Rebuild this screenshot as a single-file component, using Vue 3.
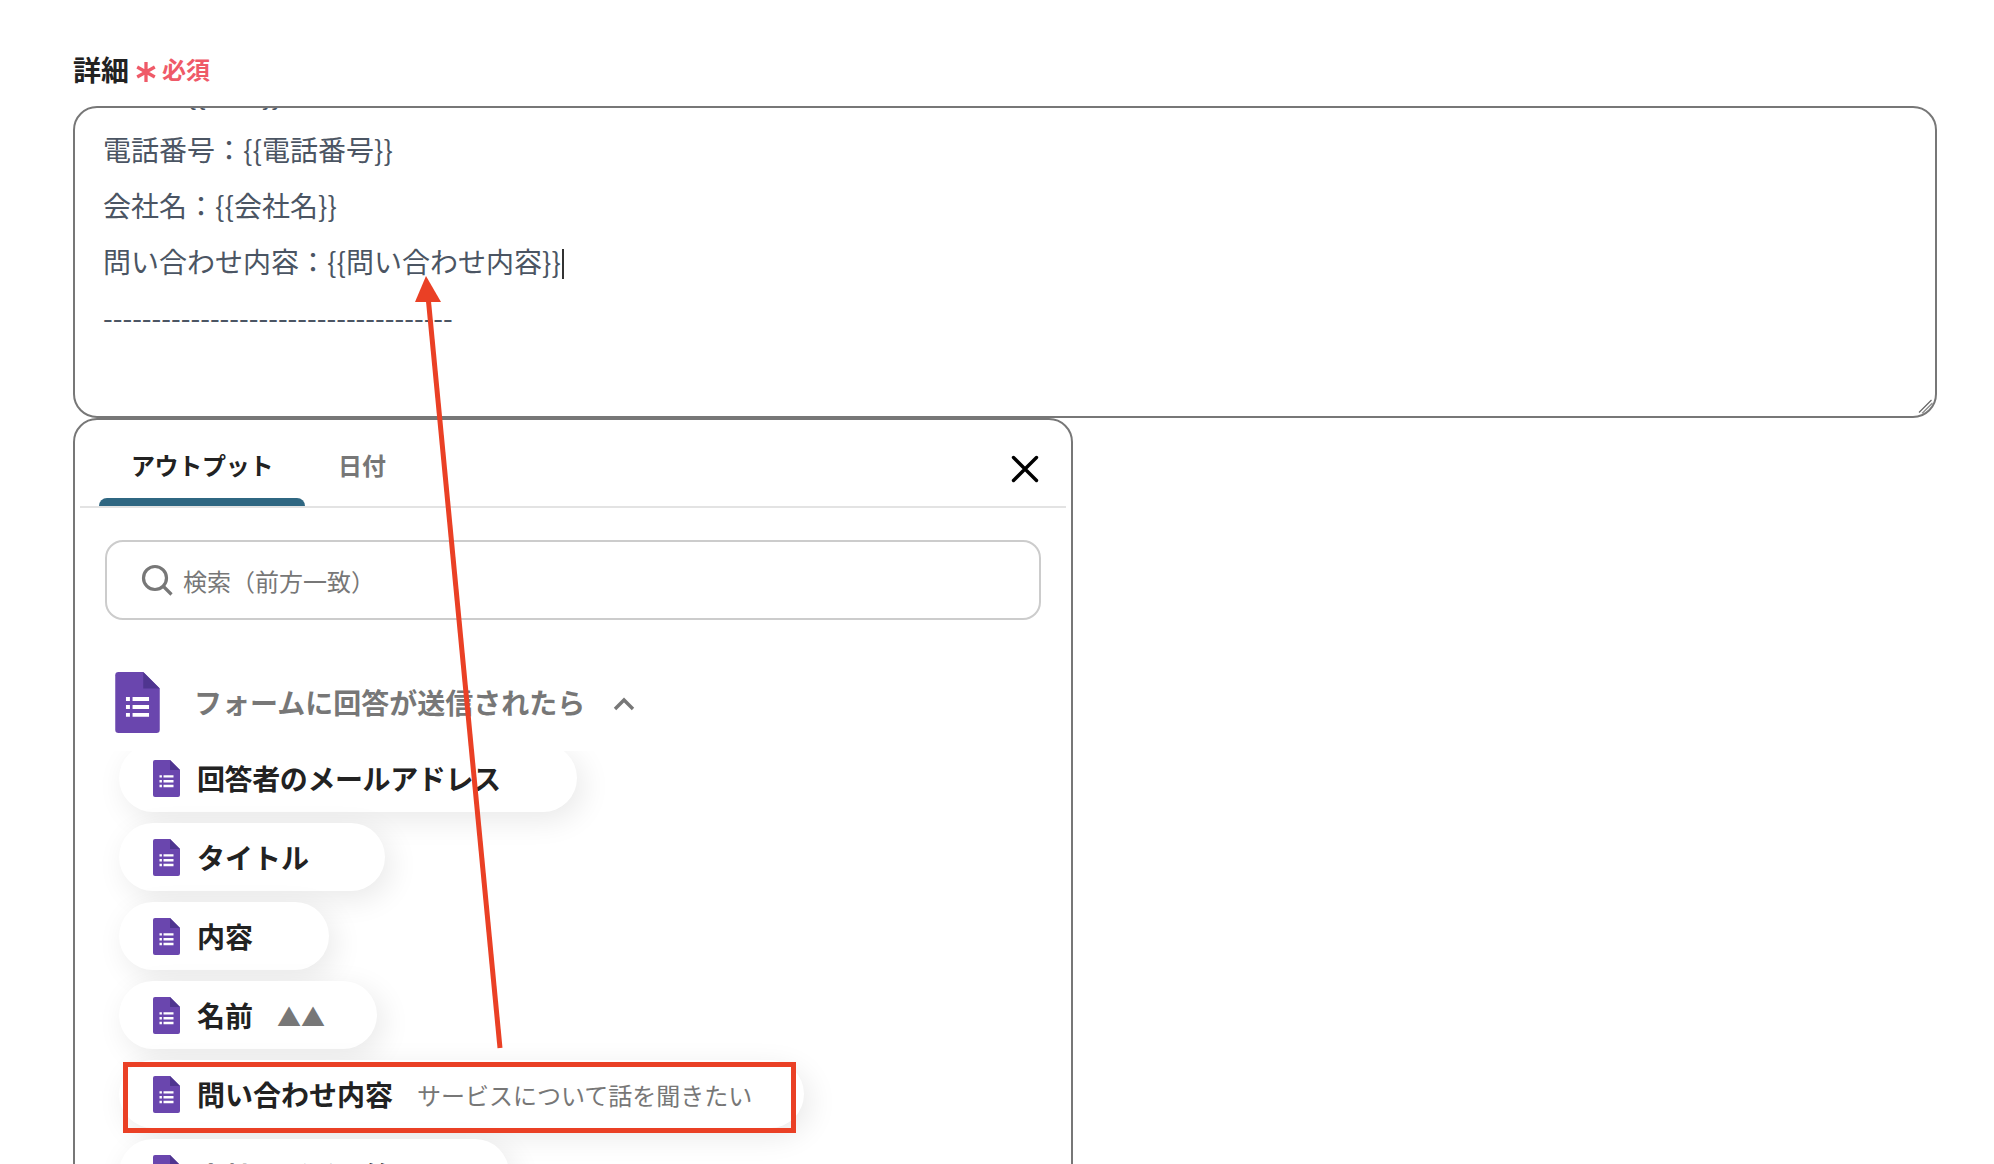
<script setup>
const lines = ['名前：{{名前}}', '電話番号：{{電話番号}}', '会社名：{{会社名}}']
const items = [
  { name: '回答者のメールアドレス', value: '', tight: true },
  { name: 'タイトル', value: '' },
  { name: '内容', value: '' },
  { name: '名前', value: '▲▲' },
  { name: '問い合わせ内容', value: 'サービスについて話を聞きたい' },
  { name: '会社電話番号等', value: '090' }
]
</script>

<template>
  <div class="page">
    <div class="label-row">
      <span class="label">詳細</span>
      <svg class="star" viewBox="0 0 20 20"><path d="M10 1v18M2 5.5l16 9M18 5.5l-16 9" fill="none" stroke="#ef5a68" stroke-width="3"/></svg>
      <span class="req">必須</span>
    </div>

    <div class="editor">
      <div class="editor-scroll">
        <p v-for="l in lines" :key="l">{{ l }}</p>
        <p>問い合わせ内容：{{ '{' + '{問い合わせ内容}' + '}' }}<span class="caret"></span></p>
        <p>------------------------------------</p>
      </div>
      <svg class="grip" viewBox="0 0 16 16"><path d="M2 14.5L14.5 2M13 14L14.5 12.5" fill="none" stroke="#666" stroke-width="1.2"/><path d="M5 15.5L15.5 5" fill="none" stroke="#888" stroke-width="1.2"/></svg>
    </div>

    <div class="panel">
      <div class="tabs">
        <div class="tab active">アウトプット</div>
        <div class="tab">日付</div>
        <svg class="close" viewBox="0 0 28 28"><path d="M2.5 2.5l23 23M25.5 2.5l-23 23" fill="none" stroke="#000" stroke-width="3.4" stroke-linecap="round"/></svg>
      </div>

      <div class="search">
        <svg class="search-icon" viewBox="0 0 32 32"><circle cx="14" cy="14" r="11.5" fill="none" stroke="#777" stroke-width="3.2"/><path d="M22 22l8.5 8.5" fill="none" stroke="#777" stroke-width="3.2"/></svg>
        <span>検索（前方一致）</span>
      </div>

      <div class="section">
        <svg class="form-large" viewBox="0 0 27 37"><use href="#form-doc"/></svg>
        <span class="section-title">フォームに回答が送信されたら</span>
        <svg class="chevron" viewBox="0 0 22 14"><path d="M2 12l9-9 9 9" fill="none" stroke="#777" stroke-width="3.4"/></svg>
      </div>

      <div class="list">
        <div v-for="it in items" :key="it.name" class="pill">
          <svg class="form-small" viewBox="0 0 27 37"><use href="#form-doc"/></svg>
          <span class="pill-name" :class="{ tight: it.tight }">{{ it.name }}</span>
          <span class="pill-value">{{ it.value }}</span>
        </div>
      </div>
    </div>

    <div class="redbox"></div>

    <svg class="annot" viewBox="0 0 1994 1164">
      <defs>
        <g id="form-doc">
          <path d="M2 0h15l10 10v25a2 2 0 0 1-2 2H2a2 2 0 0 1-2-2V2a2 2 0 0 1 2-2z" fill="#6a46ae"/>
          <path d="M17 0l10 10H17z" fill="#4f3590"/>
          <path d="M6.5 15.2h2.4v2.4H6.5zM6.5 20h2.4v2.4H6.5zM6.5 24.8h2.4v2.4H6.5zM10.5 15.2h10v2.4h-10zM10.5 20h10v2.4h-10zM10.5 24.8h10v2.4h-10z" fill="#fff"/>
        </g>
      </defs>
      <path d="M500 1048L428 296" fill="none" stroke="#ea4025" stroke-width="5"/>
      <path d="M426 276l15 26h-26z" fill="#ea4025"/>
    </svg>
  </div>
</template>

<style>
html, body { margin: 0; background: #fff; overflow: hidden; }
</style>

<style scoped>
.page {
  position: relative;
  width: 1994px;
  height: 1164px;
  overflow: hidden;
  box-sizing: border-box;
  padding: 51px 0 0 73px;
  background: #fff;
  font-family: "Noto Sans CJK JP", "Noto Sans", sans-serif;
}
.label-row { display: flex; align-items: center; height: 36px; margin-bottom: 19px; }
.label { font-size: 28px; font-weight: 700; color: #222; line-height: 36px; }
.star { width: 22px; height: 22px; margin: 6px 5px 0 6px; }
.req { font-size: 24px; font-weight: 700; color: #ef5a68; line-height: 36px; }

.editor {
  position: relative;
  box-sizing: border-box;
  width: 1864px;
  height: 312px;
  border: 2px solid #777;
  border-radius: 24px;
  overflow: hidden;
}
.editor-scroll { margin-top: -43px; padding-left: 28px; }
.editor-scroll p {
  margin: 0;
  font-size: 28px;
  line-height: 56px;
  color: #4b5563;
  white-space: pre;
}
.caret { display: inline-block; width: 2px; height: 30px; margin-left: 1px; background: #333; vertical-align: -6px; }
.grip { position: absolute; right: 2px; bottom: 2px; width: 16px; height: 16px; }

.panel {
  box-sizing: border-box;
  width: 1000px;
  height: 900px;
  border: 2px solid #777;
  border-radius: 24px;
  background: #fff;
  padding: 0 5px;
}
.tabs {
  position: relative;
  display: flex;
  height: 86px;
  padding-left: 19px;
  border-bottom: 2px solid #e3e3e3;
}
.tab {
  position: relative;
  box-sizing: border-box;
  width: 206px;
  height: 86px;
  padding-top: 27px;
  text-align: center;
  font-size: 24px;
  font-weight: 700;
  line-height: 36px;
  color: #777;
}
.tab.active { color: #222; letter-spacing: -0.3px; }
.tab.active::after {
  content: "";
  position: absolute;
  left: 0;
  right: 0;
  bottom: 0;
  height: 8px;
  background: #2f6782;
  border-radius: 8px 8px 0 0;
}
.tab + .tab { width: auto; padding-left: 33px; }
.close { position: absolute; right: 27px; top: 35px; width: 28px; height: 28px; }

.search {
  box-sizing: border-box;
  display: flex;
  align-items: center;
  height: 80px;
  margin: 32px 25px 0 25px;
  padding-left: 34px;
  border: 2px solid #ccc;
  border-radius: 18px;
  font-size: 24px;
  color: #777;
}
.search-icon { width: 32px; height: 32px; margin-right: 10px; }

.section { display: flex; align-items: center; height: 60px; margin: 52px 0 0 35px; }
.form-large { width: 45px; height: 61px; flex: none; }
.section-title { margin-left: 34px; font-size: 28px; font-weight: 700; color: #777; }
.chevron { width: 22px; height: 14px; margin: 3px 0 0 28px; }

.list {
  display: flex;
  flex-direction: column;
  align-items: flex-start;
  gap: 11px;
  height: 500px;
  margin-top: 19px;
  padding: 0 0 0 39px;
  overflow: hidden;
}
.pill {
  flex: none;
  box-sizing: border-box;
  display: flex;
  align-items: center;
  height: 68px;
  padding: 0 52px 0 34px;
  border-radius: 34px;
  background: #fff;
  box-shadow: 6px 8px 30px rgba(0, 0, 0, 0.09);
}
.pill:first-child { margin-top: -7px; }
.pill:last-child .pill-name { padding-top: 5px; }
.form-small { width: 27px; height: 37px; flex: none; margin-right: 17px; }
.pill-name { font-size: 28px; font-weight: 700; color: #222; white-space: nowrap; }
.pill-name.tight { letter-spacing: -0.4px; }
.pill-value { margin-left: 24px; font-size: 24px; color: #777; white-space: nowrap; }

.redbox {
  position: absolute;
  left: 123px;
  top: 1062px;
  width: 673px;
  height: 71px;
  box-sizing: border-box;
  border: 5px solid #ea4025;
}
.annot { position: absolute; left: 0; top: 0; width: 1994px; height: 1164px; pointer-events: none; }
</style>
